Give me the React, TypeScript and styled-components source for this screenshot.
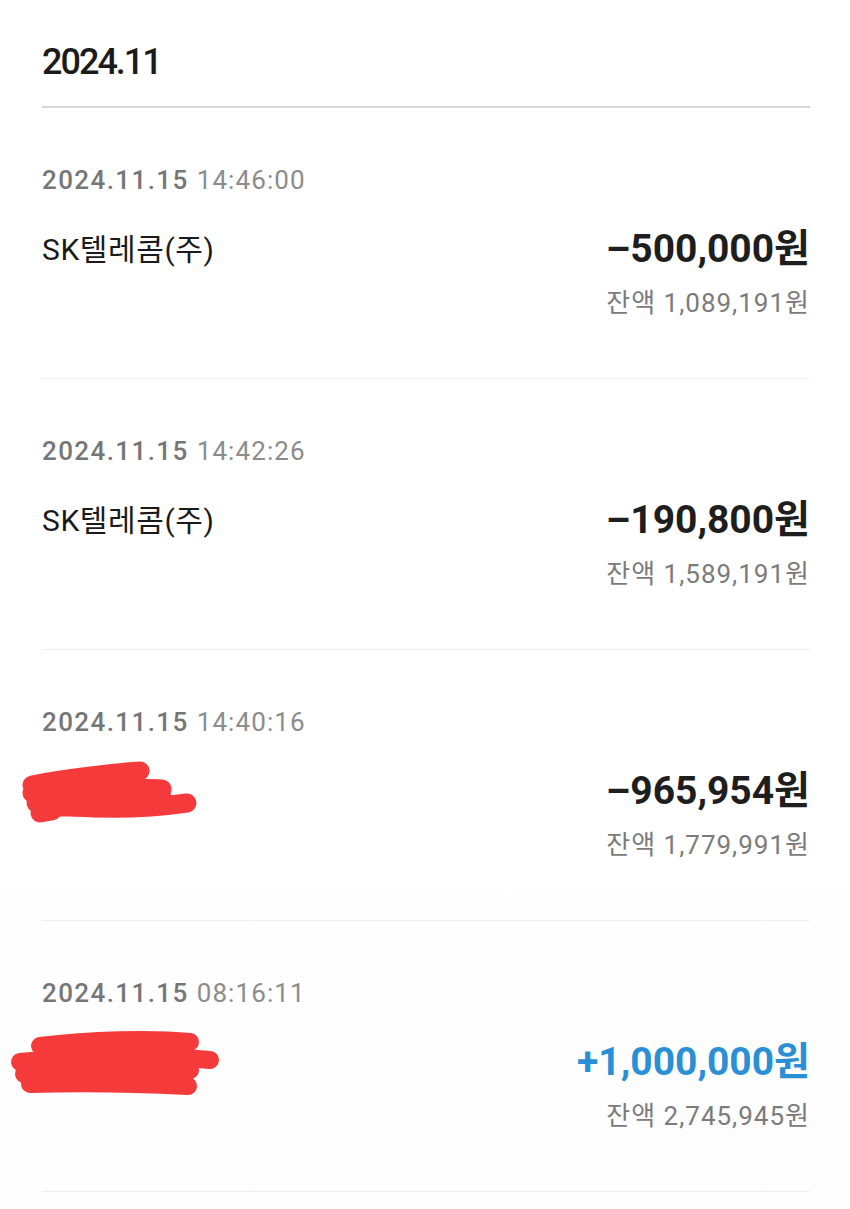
import React from "react";
import styled, { createGlobalStyle } from "styled-components";

const GlobalStyle = createGlobalStyle`
    html, body {
        margin: 0;
        padding: 0;
        background: #ffffff;
    }
    body {
        font-family: Roboto, "Noto Sans CJK KR", "Noto Sans", sans-serif;
        -webkit-font-smoothing: antialiased;
    }
`;

const Page = styled.div`
    width: 850px;
    min-height: 1209px;
    box-sizing: border-box;
    padding: 0 40px 0 42px;
    background: linear-gradient(#ffffff 0%, #ffffff 60%, #fdfdfe 100%);
    overflow: hidden;
`;

const MonthHeader = styled.div`
    padding-top: 40px;
    padding-bottom: 22px;
    border-bottom: 2px solid #d6d6da;
    font-size: 36px;
    line-height: 44px;
    font-weight: 500;
    letter-spacing: -2px;
    color: #1b1b1b;
`;

const Row = styled.div`
    padding-top: 57px;
    padding-bottom: 59px;
    border-bottom: 1px solid #efeff2;
`;

const DateLine = styled.div`
    font-size: 26px;
    line-height: 30px;
    letter-spacing: 1.1px;
    color: #8c8c8c;
`;

const DatePart = styled.span`
    font-weight: 500;
    letter-spacing: 1.4px;
    color: #767676;
    margin-right: 8px;
`;

const Body = styled.div`
    display: flex;
    justify-content: space-between;
    align-items: flex-start;
    margin-top: 32px;
`;

const Name = styled.div`
    margin-top: 5px;
    font-size: 30px;
    line-height: 36px;
    font-weight: 400;
    letter-spacing: 0.6px;
    color: #1a1a1a;
`;

const Hidden = styled.div<{ $left: number; $top: number }>`
    margin-left: ${(p) => p.$left}px;
    margin-top: ${(p) => p.$top}px;
    width: 210px;
    height: 36px;
    overflow: visible;
`;

const Amounts = styled.div`
    display: flex;
    flex-direction: column;
    align-items: flex-end;
`;

const Amount = styled.div<{ $plus?: boolean }>`
    font-size: 39px;
    line-height: 44px;
    font-weight: 700;
    color: ${(p) => (p.$plus ? "#2b8fd6" : "#1e1e1e")};
`;

const Balance = styled.div`
    margin-top: 16px;
    font-size: 26px;
    line-height: 32px;
    letter-spacing: 1px;
    color: #7b7b7b;
`;

const Scribble = ({ variant }: { variant: 1 | 2 }) =>
    variant === 1 ? (
        <svg width="180" height="70" viewBox="0 0 180 70" style={{ overflow: "visible", display: "block" }}>
            <g fill="none" stroke="#f43a3a" strokeWidth="19" strokeLinecap="round" strokeLinejoin="round">
                <path d="M10 22 C40 16 90 10 118 8" />
                <path d="M10 30 C60 28 110 24 140 26" />
                <path d="M14 40 C60 46 110 48 165 40" />
                <path d="M18 50 L30 48" />
                <path d="M30 34 L140 34" />
                <path d="M30 44 L120 44" />
            </g>
        </svg>
    ) : (
        <svg width="210" height="70" viewBox="0 0 210 70" style={{ overflow: "visible", display: "block" }}>
            <g fill="none" stroke="#f43a3a" strokeWidth="18" strokeLinecap="round" strokeLinejoin="round">
                <path d="M30 14 C80 8 140 6 180 10" />
                <path d="M10 30 C70 24 140 22 200 28" />
                <path d="M14 42 C70 38 130 38 170 40" />
                <path d="M20 52 C80 50 140 52 178 54" />
                <path d="M40 24 L170 30" />
                <path d="M40 36 L180 38" />
            </g>
        </svg>
    );

type Tx = {
    date: string;
    time: string;
    name?: string;
    scribble?: 1 | 2;
    amount: string;
    plus?: boolean;
    balance: string;
};

const items: Tx[] = [
    { date: "2024.11.15", time: "14:46:00", name: "SK텔레콤(주)", amount: "–500,000원", balance: "1,089,191원" },
    { date: "2024.11.15", time: "14:42:26", name: "SK텔레콤(주)", amount: "–190,800원", balance: "1,589,191원" },
    { date: "2024.11.15", time: "14:40:16", scribble: 1, amount: "–965,954원", balance: "1,779,991원" },
    { date: "2024.11.15", time: "08:16:11", scribble: 2, amount: "+1,000,000원", plus: true, balance: "2,745,945원" },
];

export default function App() {
    return (
        <Page>
            <GlobalStyle />
            <MonthHeader>2024.11</MonthHeader>
            {items.map((tx, i) => (
                <Row key={i}>
                    <DateLine>
                        <DatePart>{tx.date}</DatePart>
                        {tx.time}
                    </DateLine>
                    <Body>
                        {tx.name ? (
                            <Name>{tx.name}</Name>
                        ) : tx.scribble === 1 ? (
                            <Hidden $left={-20} $top={-6}>
                                <Scribble variant={1} />
                            </Hidden>
                        ) : (
                            <Hidden $left={-32} $top={-8}>
                                <Scribble variant={2} />
                            </Hidden>
                        )}
                        <Amounts>
                            <Amount $plus={tx.plus}>{tx.amount}</Amount>
                            <Balance>잔액 {tx.balance}</Balance>
                        </Amounts>
                    </Body>
                </Row>
            ))}
        </Page>
    );
}
